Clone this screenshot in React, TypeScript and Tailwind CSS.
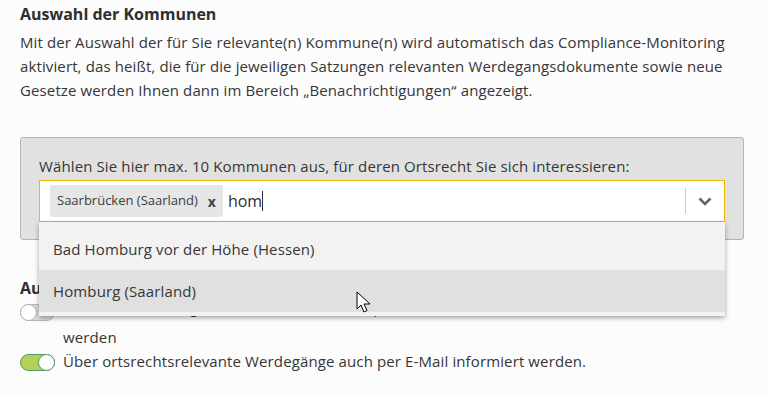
import React from "react";

function Toggle({ on }: { on: boolean }) {
  return on ? (
    <div className="relative h-[17px] w-[35px] shrink-0 rounded-full border border-[#4f9a6a] bg-[#b4d055]">
      <div className="absolute right-[-1px] top-[-1px] h-[17px] w-[17px] rounded-full border border-[#4f9a6a] bg-white" />
    </div>
  ) : (
    <div className="relative h-[17px] w-[35px] shrink-0 rounded-full border border-[#b8b8b8] bg-[#dcdcdc]">
      <div className="absolute left-[-1px] top-[-1px] h-[17px] w-[17px] rounded-full border border-[#b0b0b0] bg-white" />
    </div>
  );
}

export default function App() {
  return (
    <div
      className="relative h-[396px] w-[768px] overflow-hidden bg-[#fcfcfc] px-5 pt-[2px] text-[#363636] tracking-[0.12px]"
      style={{ fontFamily: '"Open Sans", "Noto Sans", sans-serif' }}
    >
      <h2 className="text-[16px] font-bold leading-[24px] tracking-normal text-[#2e2e2e]">Auswahl der Kommunen</h2>
      <p className="mt-[4px] text-[15px] leading-[24px]">
        Mit der Auswahl der für Sie relevante(n) Kommune(n) wird automatisch das Compliance-Monitoring
        aktiviert, das heißt, die für die jeweiligen Satzungen relevanten Werdegangsdokumente sowie neue
        Gesetze werden Ihnen dann im Bereich „Benachrichtigungen“ angezeigt.
      </p>

      <div className="relative mr-[4px] mt-[35px] rounded-[3px] border border-[#b3b3b3] bg-[#e1e1e1] px-[18px] pb-[17px] pt-[16px]">
        <div className="text-[15px] leading-[24px]">
          Wählen Sie hier max. 10 Kommunen aus, für deren Ortsrecht Sie sich interessieren:
        </div>
        <div className="relative mt-[2px]">
          <div className="flex h-[42px] items-center border border-[#f2b705] bg-white pl-[10px]">
            <div className="flex h-[32px] items-center rounded-[2px] bg-[#e6e6e6] pl-[7px] pr-[7px] tracking-normal">
              <span className="text-[13px] text-[#3c3c3c]">Saarbrücken (Saarland)</span>
              <span className="ml-[10px] text-[14px] font-bold text-[#444]">x</span>
            </div>
            <span className="ml-[5px] text-[16px] tracking-normal text-[#2e2e2e]">hom</span>
            <span className="h-[20px] w-px bg-[#333]" />
            <div className="flex-1" />
            <div className="h-[26px] w-px bg-[#cccccc]" />
            <div className="flex w-[38px] items-center justify-center">
              <svg width="14" height="9" viewBox="0 0 14 9">
                <path d="M1.5 1.5 L7 7 L12.5 1.5" fill="none" stroke="#666" strokeWidth="2.6" />
              </svg>
            </div>
          </div>
          <div className="absolute left-0 right-0 top-[42px] z-10 bg-[#f2f2f2] pb-[4px] pt-[6px] shadow-[0_2px_5px_rgba(0,0,0,0.35)]">
            <div className="flex h-[42px] items-center px-[14px] text-[15px]">Bad Homburg vor der Höhe (Hessen)</div>
            <div className="relative flex h-[42px] items-center bg-[#e0e0e0] px-[14px] text-[15px]">
              Homburg (Saarland)
              <svg className="absolute left-[317px] top-[21px]" width="16" height="24" viewBox="0 0 16 24">
                <path d="M1 1 L1 18 L5 14 L8 21 L11 19.5 L8 13 L14 13 Z" fill="#fff" stroke="#000" strokeWidth="1" strokeLinejoin="round" />
              </svg>
            </div>
          </div>
        </div>
      </div>

      <h3 className="mt-[36px] text-[16px] font-bold leading-[24px] tracking-normal text-[#2e2e2e]">
        Automatische Benachrichtigung
      </h3>
      <div className="mt-[-8px] flex items-start gap-[8px]">
        <div className="mt-[12px]">
          <Toggle on={false} />
        </div>
        <div className="text-[15px] leading-[30px]">
          Über neue Satzungen der Kommunen auch per E-Mail informiert
          <br />
          werden
        </div>
      </div>
      <div className="mt-[-3px] flex items-start gap-[8px]">
        <div className="mt-[5px]">
          <Toggle on={true} />
        </div>
        <div className="text-[15px] leading-[24px]">
          Über ortsrechtsrelevante Werdegänge auch per E-Mail informiert werden.
        </div>
      </div>
    </div>
  );
}
